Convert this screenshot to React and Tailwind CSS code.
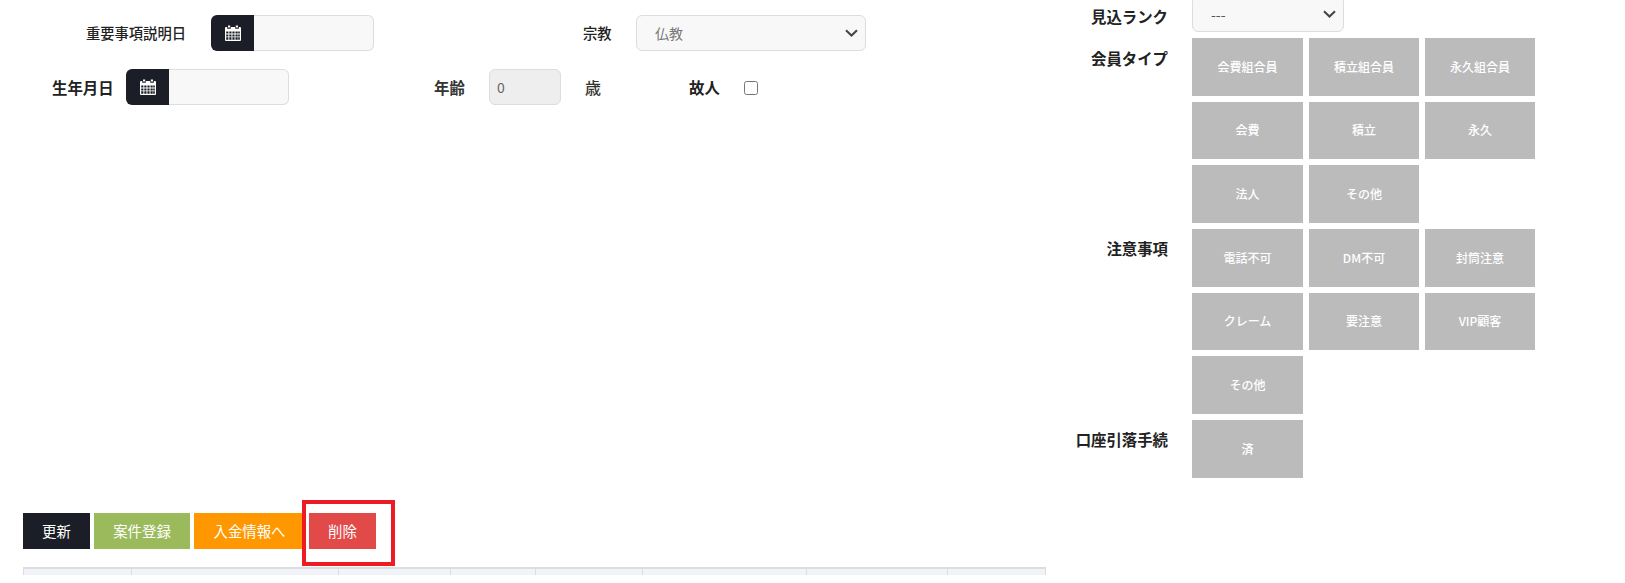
import React from "react";

const font = { fontFamily: '"Noto Sans CJK JP", "Noto Sans", sans-serif' };

function CalendarIcon() {
  return (
    <svg width="16" height="16" viewBox="0 0 16 16" aria-hidden="true">
      <path fill="#fff" d="M3 0.5h2.2v2H3zM10.8 0.5H13v2h-2.2z" />
      <path
        fill="#fff"
        fillRule="evenodd"
        d="M1 2h1.2v1.8h3.6V2h4.4v1.8h3.6V2H15a1 1 0 0 1 1 1v12a1 1 0 0 1-1 1H1a1 1 0 0 1-1-1V3a1 1 0 0 1 1-1zM1.2 6.5v2h2.2v-2zM4.3 6.5v2h2.2v-2zM7.4 6.5v2h2.2v-2zM10.5 6.5v2h2.2v-2zM13.2 6.5v2h1.6v-2zM1.2 9.4v2h2.2v-2zM4.3 9.4v2h2.2v-2zM7.4 9.4v2h2.2v-2zM10.5 9.4v2h2.2v-2zM13.2 9.4v2h1.6v-2zM1.2 12.3v2.5h2.2v-2.5zM4.3 12.3v2.5h2.2v-2.5zM7.4 12.3v2.5h2.2v-2.5zM10.5 12.3v2.5h2.2v-2.5zM13.2 12.3v2.5h1.6v-2.5z"
      />
    </svg>
  );
}

function Chevron({ className }) {
  return (
    <svg className={className} width="13" height="8" viewBox="0 0 13 8" aria-hidden="true">
      <path d="M1 1.2l5.5 5.3L12 1.2" fill="none" stroke="#444" strokeWidth="2" />
    </svg>
  );
}

function DateInput() {
  return (
    <div className="flex h-[36px] w-[163px] shrink-0">
      <div className="flex w-[43px] items-center justify-center rounded-l-[6px] bg-[#1b1e26]">
        <CalendarIcon />
      </div>
      <input
        type="text"
        className="h-full min-w-0 flex-1 rounded-r-[6px] border border-l-0 border-[#dddddd] bg-[#f8f8f8] outline-none"
      />
    </div>
  );
}

function SelectBox({ value, widthClass, textClass }) {
  return (
    <div className={`relative h-[36px] shrink-0 ${widthClass}`}>
      <select
        defaultValue={value}
        className={`h-full w-full appearance-none rounded-[6px] border border-[#dddddd] bg-[#f8f8f8] text-[14px] outline-none ${textClass}`}
      >
        <option>{value}</option>
      </select>
      <Chevron className="pointer-events-none absolute right-[8px] top-[14px]" />
    </div>
  );
}

function Action({ children, className }) {
  return (
    <button
      type="button"
      className={`flex h-[36px] items-center justify-center text-[14.4px] text-white ${className}`}
    >
      {children}
    </button>
  );
}

function Tag({ children }) {
  return (
    <button
      type="button"
      className="flex h-[57.67px] items-center justify-center bg-[#bbbbbb] text-[12px] font-medium text-white"
    >
      {children}
    </button>
  );
}

function Section({ label, items, labelPad }) {
  return (
    <div className="flex">
      <div
        className={`w-[108px] shrink-0 text-right text-[15.4px] font-bold leading-[24px] text-[#222222] whitespace-nowrap ${labelPad}`}
      >
        {label}
      </div>
      <div className="ml-[24px] grid w-[343px] grid-cols-[111px_110px_110px] gap-[6px]">
        {items.map((t, i) => (
          <Tag key={i}>{t}</Tag>
        ))}
      </div>
    </div>
  );
}

const colWidths = [108, 207, 112, 85, 107, 164, 141, 98];

export default function App() {
  return (
    <div className="flex h-[583px] w-[1625px] overflow-hidden bg-white" style={font}>
      <div className="w-[1060px] shrink-0 pl-[23px] pt-[15px]">
        <div className="flex h-[36px] items-center">
          <span className="w-[163px] shrink-0 text-right text-[14.3px] font-medium text-[#222222]">
            重要事項説明日
          </span>
          <div className="ml-[25px]">
            <DateInput />
          </div>
          <span className="ml-[209px] w-[53px] shrink-0 text-[14.3px] font-medium text-[#222222]">宗教</span>
          <SelectBox value="仏教" widthClass="w-[230px]" textClass="pl-[18px] text-[#777777]" />
        </div>

        <div className="mt-[18px] flex h-[36px] items-center">
          <span className="ml-[29px] w-[74px] shrink-0 pt-[2px] text-[15.4px] font-bold text-[#222222]">生年月日</span>
          <DateInput />
          <span className="ml-[145px] w-[55px] shrink-0 pt-[2px] text-[15.4px] font-bold text-[#333333]">年齢</span>
          <input
            readOnly
            value="0"
            className="h-[36px] w-[72px] shrink-0 rounded-[6px] border border-[#dddddd] bg-[#eeeeee] pl-[7px] text-[14px] text-[#666666] outline-none"
          />
          <span className="ml-[24px] w-[104px] shrink-0 text-[16px] font-medium text-[#333333]">歳</span>
          <span className="w-[55px] shrink-0 pt-[2px] text-[15.4px] font-bold text-[#222222]">故人</span>
          <input type="checkbox" className="m-0 mt-[2px] h-[14px] w-[14px]" />
        </div>

        <div className="relative mt-[408px] flex gap-[4px]">
          <Action className="w-[67px] bg-[#1b1e26]">更新</Action>
          <Action className="w-[96px] bg-[#9bba5c]">案件登録</Action>
          <Action className="w-[111px] bg-[#ff9800]">入金情報へ</Action>
          <Action className="w-[67px] bg-[#e24a4a]">削除</Action>
          <div className="pointer-events-none absolute left-[279px] top-[-13px] h-[66px] w-[93px] border-[4.5px] border-[#ed1c24]" />
        </div>

        <table className="mt-[18px] table-fixed border-collapse" style={{ width: 1022 }}>
          <colgroup>
            {colWidths.map((w, i) => (
              <col key={i} style={{ width: w }} />
            ))}
          </colgroup>
          <thead>
            <tr>
              {colWidths.map((_, i) => (
                <th
                  key={i}
                  className="h-[7px] border-x border-t-2 border-[#dddddd] bg-[#f0f3f8] p-0"
                />
              ))}
            </tr>
          </thead>
        </table>
      </div>

      <div className="mt-[-4px] flex w-[565px] flex-col gap-[6px] pl-0">
        <div className="flex">
          <div className="w-[108px] shrink-0 pt-[8px] text-right text-[15.4px] font-bold leading-[24px] text-[#222222]">
            見込ランク
          </div>
          <div className="ml-[24px]">
            <SelectBox value="---" widthClass="w-[152px]" textClass="pl-[18px] text-[#555555]" />
          </div>
        </div>
        <Section
          label="会員タイプ"
          labelPad="pt-[8px]"
          items={["会費組合員", "積立組合員", "永久組合員", "会費", "積立", "永久", "法人", "その他"]}
        />
        <Section
          label="注意事項"
          labelPad="pt-[7px]"
          items={["電話不可", "DM不可", "封筒注意", "クレーム", "要注意", "VIP顧客", "その他"]}
        />
        <Section label="口座引落手続" labelPad="pt-[7px]" items={["済"]} />
      </div>
    </div>
  );
}
